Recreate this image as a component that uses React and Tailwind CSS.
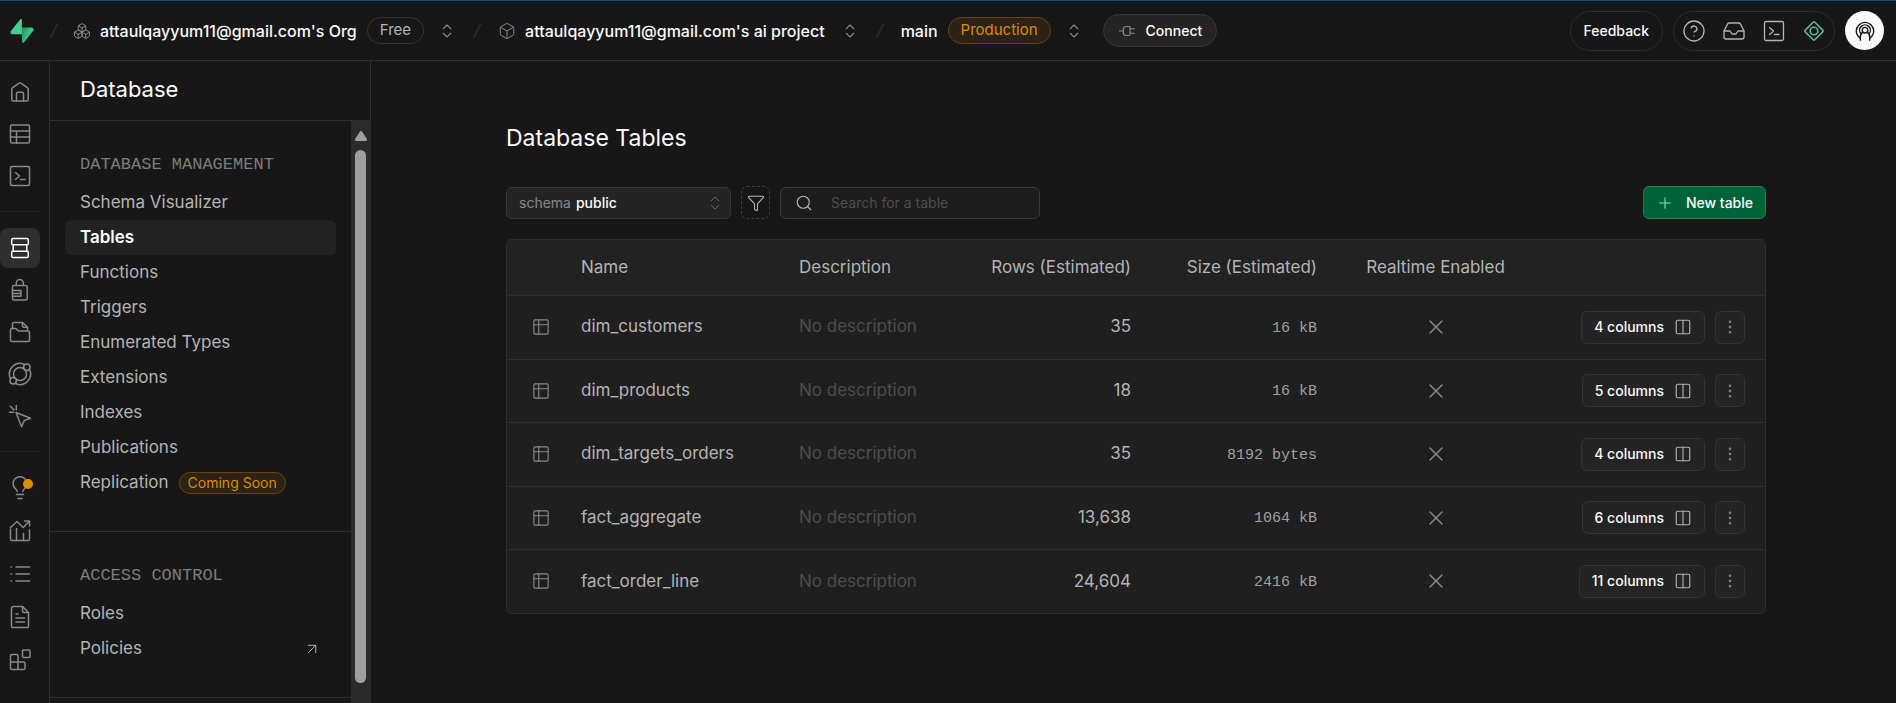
import React from "react";
import {
  ArrowUpRight,
  Box,
  Boxes,
  ChevronsUpDown,
  CircleHelp,
  Columns2,
  EllipsisVertical,
  Filter,
  Inbox,
  Plug,
  Plus,
  Search,
  X,
} from "lucide-react";

function Glyph({ size = 24, stroke = 1.5, className = "", children }) {
  return (
    <svg
      width={size}
      height={size}
      viewBox="0 0 24 24"
      fill="none"
      stroke="currentColor"
      strokeWidth={stroke}
      strokeLinecap="round"
      strokeLinejoin="round"
      aria-hidden="true"
      className={className}
    >
      {children}
    </svg>
  );
}

const HomeIcon = () => (
  <Glyph>
    <path d="M3.8 9.4c0-.7.3-1.3.9-1.7l6-4.3c.8-.6 1.800-.6 2.600 0l6 4.300c.6.4.9 1 .9 1.700v10c0 .9-.7 1.600-1.600 1.600H5.400c-.9 0-1.600-.7-1.600-1.600z" />
    <path d="M8.500 21v-7.400c0-.8.6-1.400 1.400-1.400h4.200c.8 0 1.400.6 1.400 1.400V21" />
  </Glyph>
);

const TableEditorIcon = () => (
  <Glyph>
    <rect x="2.500" y="3" width="19" height="18" rx="1.500" />
    <path d="M2.500 9h19M2.500 15h19M8.500 9v12" />
  </Glyph>
);

const TerminalIcon = ({ size = 24, stroke = 1.5 }) => (
  <Glyph size={size} stroke={stroke}>
    <rect x="2.500" y="2.500" width="19" height="19" rx="1.500" />
    <path d="m7.500 8.500 4 3.500-4 3.500M12.500 15.500H17" />
  </Glyph>
);

const DatabaseIcon = () => (
  <Glyph>
    <rect x="3.700" y="2.400" width="16.600" height="6.400" rx="1.400" />
    <path d="M5.200 8.800v6.400M18.800 8.800v6.400" />
    <rect x="3.700" y="15.200" width="16.600" height="6.400" rx="1.400" />
  </Glyph>
);

const AuthIcon = () => (
  <Glyph>
    <path d="M8.300 7.500V5a3.500 3.500 0 0 1 7 0v2.500" />
    <path d="M4.500 12V9c0-.8.6-1.500 1.500-1.500h11.500c.9 0 1.700.7 1.700 1.500v11.500c0 .8-.7 1.500-1.600 1.500H6c-.8 0-1.500-.7-1.500-1.500V12z" />
    <path d="M4.500 12.500h8.500v5.800H4.500M4.500 15.400H13" />
  </Glyph>
);

const StorageIcon = () => (
  <Glyph>
    <path d="M4.500 8.500V3.500c0-.6.4-1 1-1h9l5 4.800v3" />
    <path d="M14.500 2.500v3.800c0 .6.4 1 1 1h4" />
    <path d="M2.500 10c0-.8.6-1.500 1.400-1.500h3.400c.4 0 .8.200 1.100.5l1.400 1.500c.3.300.7.500 1.100.5h9c.9 0 1.600.7 1.600 1.500V20c0 .8-.7 1.500-1.500 1.500H4c-.8 0-1.500-.7-1.500-1.500z" />
  </Glyph>
);

const FunctionsIcon = () => (
  <Glyph>
    <circle cx="12" cy="12" r="6.500" />
    <circle cx="18.800" cy="5.200" r="3.200" />
    <circle cx="5.200" cy="18.800" r="3.200" />
    <path d="M16 2.200A10.600 10.600 0 0 0 2.200 16M21.800 8A10.600 10.600 0 0 1 8 21.800" />
  </Glyph>
);

const RealtimeIcon = () => (
  <Glyph>
    <path d="m8 8.500 14.500 5.700-6.200 2.300-2.700 6.300z" />
    <path d="M8.300 1.500v4.200M1.500 8.300h4.200M2.300 2.300l3.600 3.600" />
  </Glyph>
);

const BulbIcon = () => (
  <Glyph>
    <path d="M9.200 15.500c0-2.700-4.200-3.300-4.200-7.800a7 7 0 0 1 14 0c0 4.500-4.200 5.100-4.200 7.800" />
    <path d="M8.500 18.600h7M9.800 22.600h4.400" />
  </Glyph>
);

const ReportsIcon = () => (
  <Glyph>
    <path d="M2.500 10v10c0 .9.600 1.500 1.500 1.500h16c.900 0 1.500-.6 1.500-1.500v-9M8.500 9.500v12M15.500 14.500v7" />
    <path d="m2.500 8.500 6.500-6 6.200 6 6-6M16.500 2h5v5" />
  </Glyph>
);

const LogsIcon = () => (
  <Glyph>
    <path d="M8 5h13.500M8 12h13.500M8 19h13.500M3 5h.5M3 12h.5M3 19h.5" />
  </Glyph>
);

const DocsIcon = () => (
  <Glyph>
    <path d="M14.500 1.500H5.500c-1 0-2 .8-2 1.800v17.400c0 1 .9 1.800 1.900 1.800h13.200c1 0 1.900-.8 1.900-1.800V7.500z" />
    <path d="M14.500 1.500v4.500c0 .8.7 1.500 1.500 1.500h4.500M8 9h2M8 13h8.500M8 17h8.500" />
  </Glyph>
);

const BlocksIcon = () => (
  <Glyph>
    <rect x="14.500" y="2" width="7.500" height="7.500" rx="1" />
    <path d="M2.500 8c0-.8.7-1.500 1.500-1.500h4.500c.8 0 1.500.7 1.500 1.500v6h5.500c.8 0 1.500.7 1.500 1.500V20c0 .8-.7 1.500-1.500 1.500H4c-.8 0-1.500-.7-1.500-1.500zM2.500 14H10v7.500" />
  </Glyph>
);

const AdvisorIcon = () => (
  <Glyph size={24} stroke={1.6}>
    <rect x="5.200" y="5.200" width="13.600" height="13.600" rx="1.200" transform="rotate(45 12 12)" />
    <circle cx="12" cy="12" r="3.800" />
  </Glyph>
);

const AvatarIcon = () => (
  <Glyph size={24} stroke={1.4}>
    <path d="M7.300 19.200c-2.400-1.500-4-4.100-4-7.100a8.700 8.700 0 0 1 17.400 0c0 3-1.600 5.600-4 7.100" />
    <circle cx="12" cy="11.200" r="2.800" />
    <path d="M9.900 13.200C8.300 14.200 7.300 16 7.300 18v3.300M14.100 13.200c1.600 1 2.600 2.800 2.600 4.800v3.300" />
    <path d="M7.900 14.800a5.400 5.400 0 1 1 8.200 0" />
  </Glyph>
);

const TableRowIcon = () => (
  <Glyph size={18} stroke={1.5}>
    <rect x="2.500" y="2.500" width="19" height="19" rx="1.800" />
    <path d="M2.500 9h19M9 2.500v19" />
  </Glyph>
);

const Logo = () => (
  <svg width="24" height="24" viewBox="0 0 109 113" fill="none" aria-hidden="true">
    <defs>
      <linearGradient id="bolt" x1="54" y1="55" x2="94" y2="72" gradientUnits="userSpaceOnUse">
        <stop stopColor="#249361" />
        <stop offset="1" stopColor="#3ECF8E" />
      </linearGradient>
    </defs>
    <path
      d="M63.700 110.300c-2.900 3.600-8.700 1.600-8.700-3L54 40h45.200c8.200 0 12.800 9.500 7.700 15.900z"
      fill="url(#bolt)"
    />
    <path
      d="M45.300 2.100c2.900-3.600 8.700-1.700 8.700 2.900l.5 67.300H9.800c-8.200 0-12.700-9.500-7.600-15.900z"
      fill="#3ECF8E"
    />
  </svg>
);

const Slash = () => (
  <svg width="10" height="16" viewBox="0 0 10 16" stroke="#3a3a3a" aria-hidden="true">
    <path d="M8.500 1 1.500 15" />
  </svg>
);

const Switcher = ({ label }) => (
  <button type="button" aria-label={label} className="flex text-[#898989]">
    <ChevronsUpDown size={18} strokeWidth={1.5} />
  </button>
);

function Header() {
  return (
    <header className="flex h-[61px] shrink-0 items-center justify-between border-t border-b border-t-[#0b4f85] border-b-[#2e2e2e] pr-3 pl-[10px]">
      <div className="flex items-center whitespace-nowrap text-base font-medium text-[#fafafa]">
        <a href="#home" aria-label="Supabase" className="mr-[15px]">
          <Logo />
        </a>
        <Slash />
        <a href="#org" className="ml-[14px] flex items-center gap-[9px]">
          <Boxes size={18} strokeWidth={1.3} className="text-[#898989]" />
          attaulqayyum11@gmail.com's Org
        </a>
        <span className="mr-[14px] ml-[10px] flex h-[27px] items-center rounded-full border border-[#363636] px-3 text-[15px] font-normal text-[#b4b4b4]">
          Free
        </span>
        <Switcher label="Switch organization" />
        <span className="mx-4 flex">
          <Slash />
        </span>
        <a href="#project" className="flex items-center gap-[9px]">
          <Box size={18} strokeWidth={1.3} className="text-[#898989]" />
          attaulqayyum11@gmail.com's ai project
        </a>
        <span className="ml-4 flex">
          <Switcher label="Switch project" />
        </span>
        <span className="mx-4 flex">
          <Slash />
        </span>
        <a href="#branch">main</a>
        <span className="mr-[14px] ml-[10px] flex h-[27px] items-center rounded-full border border-[#6b4208] bg-[#2c2216] px-3 text-[15px] font-normal text-[#db8e00]">
          Production
        </span>
        <Switcher label="Switch branch" />
        <button
          type="button"
          className="ml-5 flex h-[33px] items-center gap-[10px] rounded-full border border-[#363636] bg-[#242424] px-[14px] text-sm"
        >
          <Plug size={18} strokeWidth={1.5} className="rotate-90 text-[#898989]" />
          Connect
        </button>
      </div>
      <div className="flex items-center gap-[10px]">
        <button
          type="button"
          className="h-10 rounded-full border border-[#2e2e2e] px-[13px] text-sm font-medium text-[#fafafa]"
        >
          Feedback
        </button>
        <div className="flex h-10 items-center gap-4 rounded-full border border-[#2e2e2e] px-2 text-[#b4b4b4]">
          <button type="button" aria-label="Help">
            <CircleHelp size={24} strokeWidth={1.3} />
          </button>
          <button type="button" aria-label="Inbox">
            <Inbox size={24} strokeWidth={1.3} />
          </button>
          <button type="button" aria-label="SQL editor">
            <TerminalIcon stroke={1.3} />
          </button>
          <button type="button" aria-label="Advisor" className="text-[#5fb592]">
            <AdvisorIcon />
          </button>
        </div>
        <button
          type="button"
          aria-label="Account"
          className="flex size-[39px] items-center justify-center rounded-full bg-[#fafafa] text-[#171717]"
        >
          <AvatarIcon />
        </button>
      </div>
    </header>
  );
}

function RailItem({ label, icon: Icon, active, dot }) {
  return (
    <a
      href={"#" + label}
      aria-label={label}
      className={
        active
          ? "relative flex size-10 items-center justify-center rounded-lg bg-[#2e2e2e] text-[#fafafa]"
          : "relative flex size-10 items-center justify-center rounded-lg text-[#898989]"
      }
    >
      <Icon />
      {dot && <span className="absolute top-[11px] right-[7px] size-[10px] rounded-full bg-[#db8e00]" />}
    </a>
  );
}

function Rail() {
  return (
    <nav
      aria-label="Products"
      className="flex w-[50px] shrink-0 flex-col border-r border-[#2e2e2e] pt-[11px] pr-[9px]"
    >
      <div className="flex flex-col gap-[2px]">
        <RailItem label="Home" icon={HomeIcon} />
        <RailItem label="Table editor" icon={TableEditorIcon} />
        <RailItem label="SQL editor" icon={TerminalIcon} />
      </div>
      <hr className="mt-[15px] mb-4 border-[#242424]" />
      <div className="flex flex-col gap-[2px]">
        <RailItem label="Database" icon={DatabaseIcon} active />
        <RailItem label="Authentication" icon={AuthIcon} />
        <RailItem label="Storage" icon={StorageIcon} />
        <RailItem label="Edge functions" icon={FunctionsIcon} />
        <RailItem label="Realtime" icon={RealtimeIcon} />
      </div>
      <hr className="mt-[15px] mb-4 border-[#242424]" />
      <div className="flex flex-col gap-[3px]">
        <RailItem label="Advisors" icon={BulbIcon} dot />
        <RailItem label="Reports" icon={ReportsIcon} />
        <RailItem label="Logs" icon={LogsIcon} />
        <RailItem label="API docs" icon={DocsIcon} />
        <RailItem label="Integrations" icon={BlocksIcon} />
      </div>
    </nav>
  );
}

function MenuItem({ label, active, badge, external }) {
  return (
    <a
      href={"#" + label}
      className={
        active
          ? "flex h-[35px] items-center rounded-md bg-[#222222] px-[15px] font-semibold text-[#fafafa]"
          : "flex h-[35px] items-center rounded-md px-[15px]"
      }
    >
      {label}
      {badge && (
        <span className="ml-[10px] flex h-[22px] items-center rounded-full border border-[#6b4208] bg-[#2c2216] px-2 text-sm text-[#db8e00]">
          {badge}
        </span>
      )}
      {external && <ArrowUpRight size={18} strokeWidth={1.3} className="ml-auto" />}
    </a>
  );
}

function MenuSection({ title, items }) {
  return (
    <section className="border-b border-[#2e2e2e] px-[15px] pt-[30px] pb-[31px]">
      <h2 className="mb-[6px] px-[15px] py-[2px] font-['Liberation_Mono',monospace] text-[17px] leading-6 text-[#7d7d7d]">
        {title}
      </h2>
      {items.map((item) => (
        <MenuItem key={item.label} {...item} />
      ))}
    </section>
  );
}

const management = [
  { label: "Schema Visualizer" },
  { label: "Tables", active: true },
  { label: "Functions" },
  { label: "Triggers" },
  { label: "Enumerated Types" },
  { label: "Extensions" },
  { label: "Indexes" },
  { label: "Publications" },
  { label: "Replication", badge: "Coming Soon" },
];

const access = [{ label: "Roles" }, { label: "Policies", external: true }];

function Sidebar() {
  return (
    <aside className="flex w-[321px] shrink-0 flex-col border-r border-[#2e2e2e]">
      <div className="flex h-[60px] shrink-0 items-center border-b border-[#2e2e2e] px-[30px]">
        <h1 className="pb-1 text-[22px] leading-7 text-[#fafafa]">Database</h1>
      </div>
      <div className="flex min-h-0 flex-1">
        <nav aria-label="Database" className="min-w-0 flex-1 overflow-hidden text-[17px] text-[#b4b4b4]">
          <MenuSection title="DATABASE MANAGEMENT" items={management} />
          <MenuSection title="ACCESS CONTROL" items={access} />
        </nav>
        <div className="flex w-[19px] flex-col items-center bg-[#2b2b2b] pt-[10px] pb-5">
          <svg width="12" height="10" viewBox="0 0 12 10" fill="#9f9f9f" aria-hidden="true">
            <path d="M6 0c.5 0 .9.300 1.200.7L11.600 7.600c.8 1.200.3 2.400-1.100 2.400h-9C.1 10-.4 8.800.4 7.600L4.800.7C5.100.300 5.500 0 6 0z" />
          </svg>
          <div className="mt-[9px] w-[11px] flex-1 rounded-full bg-[#9f9f9f]" />
        </div>
      </div>
    </aside>
  );
}

function Toolbar() {
  return (
    <div className="mt-[34px] flex items-center justify-between text-sm">
      <div className="flex items-center gap-[10px]">
        <div className="flex h-8 w-[225px] items-center rounded-md border border-[#363636] bg-[#242424] pr-[6px] pl-3">
          <label htmlFor="schema" className="mr-[5px] text-[#898989]">
            schema
          </label>
          <select
            id="schema"
            className="min-w-0 flex-1 appearance-none bg-transparent font-medium text-[#fafafa] outline-none"
          >
            <option>public</option>
          </select>
          <ChevronsUpDown size={18} strokeWidth={1.2} className="text-[#707070]" />
        </div>
        <button
          type="button"
          aria-label="Filter"
          className="flex h-[33px] w-[29px] items-center justify-center rounded-md border border-dashed border-[#3e3e3e] text-[#b4b4b4]"
        >
          <Filter size={18} strokeWidth={1.5} />
        </button>
        <div className="flex h-8 w-[260px] items-center gap-[18px] rounded-md border border-[#393939] bg-[#1d1d1d] px-[14px]">
          <Search size={18} strokeWidth={1.5} className="shrink-0 text-[#b4b4b4]" />
          <input
            type="text"
            aria-label="Search for a table"
            placeholder="Search for a table"
            className="min-w-0 flex-1 bg-transparent outline-none placeholder:text-[#4d4d4d]"
          />
        </div>
      </div>
      <button
        type="button"
        className="flex h-[33px] items-center gap-3 rounded-md border border-[#1a8552] bg-[#006239] px-3 font-medium text-[#fafafa]"
      >
        <Plus size={18} strokeWidth={1.5} className="text-[#85e0ba]" />
        New table
      </button>
    </div>
  );
}

const tables = [
  { name: "dim_customers", rows: "35", size: "16 kB", columns: 4 },
  { name: "dim_products", rows: "18", size: "16 kB", columns: 5 },
  { name: "dim_targets_orders", rows: "35", size: "8192 bytes", columns: 4 },
  { name: "fact_aggregate", rows: "13,638", size: "1064 kB", columns: 6 },
  { name: "fact_order_line", rows: "24,604", size: "2416 kB", columns: 11 },
];

function TableList() {
  return (
    <div className="mt-5 overflow-hidden rounded-md border border-[#2e2e2e] bg-[#1f1f1f]">
      <table className="w-full table-fixed text-[17px] text-[#b4b4b4]">
        <colgroup>
          <col className="w-[49px]" />
          <col className="w-[218px]" />
          <col className="w-[196px]" />
          <col className="w-[186px]" />
          <col className="w-[186px]" />
          <col className="w-[187px]" />
          <col />
        </colgroup>
        <thead>
          <tr className="h-[55px] bg-[#222222] whitespace-nowrap">
            <th aria-label="Type" />
            <th className="px-[25px] text-left font-normal">Name</th>
            <th className="px-[25px] text-left font-normal">Description</th>
            <th className="px-[25px] font-normal">
              <span className="flex justify-end">Rows (Estimated)</span>
            </th>
            <th className="px-[25px] font-normal">
              <span className="flex justify-end">Size (Estimated)</span>
            </th>
            <th className="px-[20px] font-normal">
              <span className="flex justify-center">Realtime Enabled</span>
            </th>
            <th aria-label="Actions" />
          </tr>
        </thead>
        <tbody>
          {tables.map((t) => (
            <tr key={t.name} className="h-[63px] border-t border-[#2e2e2e] odd:h-16">
              <td className="pl-[25px] text-[#898989]">
                <TableRowIcon />
              </td>
              <td className="px-[25px]">{t.name}</td>
              <td className="px-[25px] text-[#4d4d4d]">No description</td>
              <td className="px-[25px] text-right">{t.rows}</td>
              <td className="px-[25px] pt-1 text-right font-['Liberation_Mono',monospace] text-[15px] text-[#a0a0a0]">
                {t.size}
              </td>
              <td className="text-[#898989]">
                <X size={24} strokeWidth={1.5} aria-label="Disabled" className="mx-auto" />
              </td>
              <td>
                <div className="flex items-center justify-end gap-[10px] pr-5 text-sm font-medium text-[#fafafa]">
                  <button
                    type="button"
                    className="flex h-[33px] items-center gap-[10px] rounded-md border border-[#333333] bg-[#242424] px-3"
                  >
                    {t.columns} columns
                    <Columns2 size={18} strokeWidth={1.5} className="text-[#b4b4b4]" />
                  </button>
                  <button
                    type="button"
                    aria-label={"Actions for " + t.name}
                    className="flex h-[33px] w-[30px] items-center justify-center rounded-md border border-[#333333] bg-[#242424] text-[#898989]"
                  >
                    <EllipsisVertical size={18} strokeWidth={1.5} />
                  </button>
                </div>
              </td>
            </tr>
          ))}
        </tbody>
      </table>
    </div>
  );
}

export default function App() {
  return (
    <div className="flex h-screen flex-col overflow-hidden bg-[#171717] font-['Inter',sans-serif]">
      <Header />
      <div className="flex min-h-0 flex-1">
        <Rail />
        <Sidebar />
        <main className="min-w-0 flex-1 overflow-auto pt-[63px] pr-[130px] pl-[135px]">
          <h2 className="text-[23px] leading-7 text-[#fafafa]">Database Tables</h2>
          <Toolbar />
          <TableList />
        </main>
      </div>
    </div>
  );
}
